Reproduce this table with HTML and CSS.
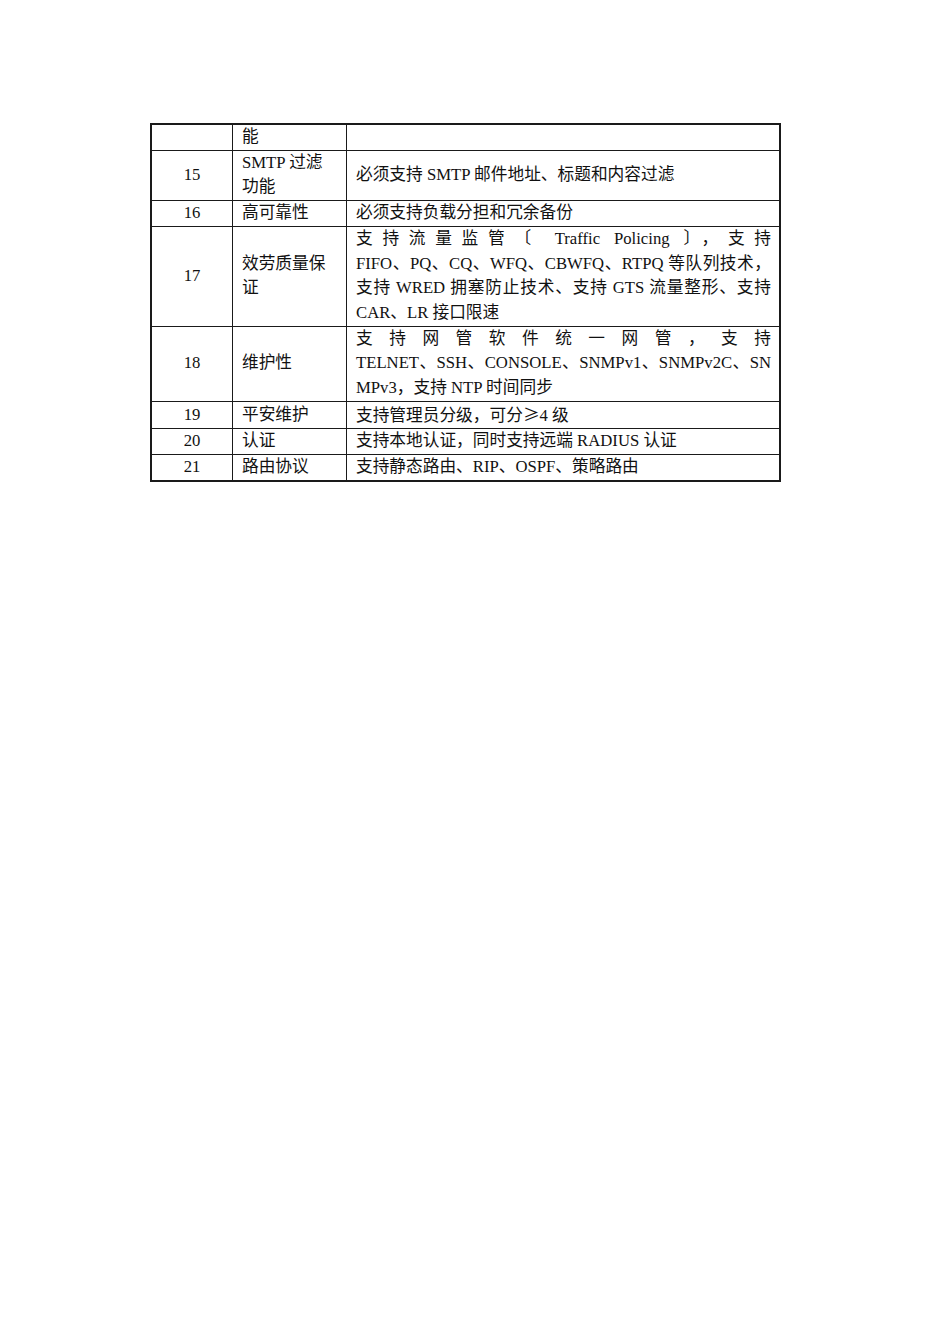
FILE: index.html
```html
<!DOCTYPE html>
<html lang="zh-CN">
<head>
<meta charset="utf-8">
<title>技术要求</title>
<link rel="stylesheet" href="styles.css">
</head>
<body>
<div class="page">
  <table class="spec">
    <colgroup>
      <col class="c-no">
      <col class="c-item">
      <col class="c-desc">
    </colgroup>
    <tbody>
      <tr>
        <td class="no"></td>
        <td class="item">能</td>
        <td class="desc"></td>
      </tr>
      <tr>
        <td class="no">15</td>
        <td class="item">SMTP 过滤<br>功能</td>
        <td class="desc">必须支持 SMTP 邮件地址、标题和内容过滤</td>
      </tr>
      <tr>
        <td class="no">16</td>
        <td class="item">高可靠性</td>
        <td class="desc">必须支持负载分担和冗余备份</td>
      </tr>
      <tr>
        <td class="no">17</td>
        <td class="item">效劳质量保<br>证</td>
        <td class="desc">
          <span class="jl">支持流量监管〔 Traffic Policing 〕，支持</span>
          <span class="jl">FIFO、PQ、CQ、WFQ、CBWFQ、RTPQ 等队列技术，</span>
          <span class="jl">支持 WRED 拥塞防止技术、支持 GTS 流量整形、支持</span>
          <span class="ll">CAR、LR 接口限速</span>
        </td>
      </tr>
      <tr>
        <td class="no">18</td>
        <td class="item">维护性</td>
        <td class="desc">
          <span class="jl">支持网管软件统一网管，支持</span>
          <span class="jl">TELNET、SSH、CONSOLE、SNMPv1、SNMPv2C、SN</span>
          <span class="ll">MPv3，支持 NTP 时间同步</span>
        </td>
      </tr>
      <tr>
        <td class="no">19</td>
        <td class="item">平安维护</td>
        <td class="desc">支持管理员分级，可分<span class="cjk">≥</span>4 级</td>
      </tr>
      <tr>
        <td class="no">20</td>
        <td class="item">认证</td>
        <td class="desc">支持本地认证，同时支持远端 RADIUS 认证</td>
      </tr>
      <tr>
        <td class="no">21</td>
        <td class="item">路由协议</td>
        <td class="desc">支持静态路由、RIP、OSPF、策略路由</td>
      </tr>
    </tbody>
  </table>
</div>
</body>
</html>
```
FILE: styles.css
```css
html, body {
  margin: 0;
  padding: 0;
  background: #ffffff;
}

body {
  font-family: "Liberation Serif", "Noto Sans CJK SC", serif;
  font-size: 16.7px;
  color: #111111;
}

.page {
  width: 950px;
  height: 1344px;
  box-sizing: border-box;
  padding: 123px 0 0 150px;
}

.spec {
  border-collapse: separate;
  border-spacing: 0;
  border: 2px solid #1a1a1a;
  width: 631px;
  table-layout: fixed;
}

.c-no { width: 81px; }
.c-item { width: 114px; }
.c-desc { width: 432px; }

.spec td {
  padding: 0 8px 0 9px;
  line-height: 24.7px;
  vertical-align: middle;
  border-right: 1px solid #1a1a1a;
  border-bottom: 1px solid #1a1a1a;
  text-align: left;
  white-space: nowrap;
}

.spec td.desc {
  border-right: none;
}

.spec tr:last-child td {
  border-bottom: none;
}

.spec td.no {
  text-align: center;
  padding: 0;
}

.cjk {
  font-family: "Noto Sans CJK SC", sans-serif;
}

.jl {
  display: block;
  text-align: justify;
  text-align-last: justify;
  text-justify: inter-character;
}

.ll {
  display: block;
  text-align: left;
}
```
